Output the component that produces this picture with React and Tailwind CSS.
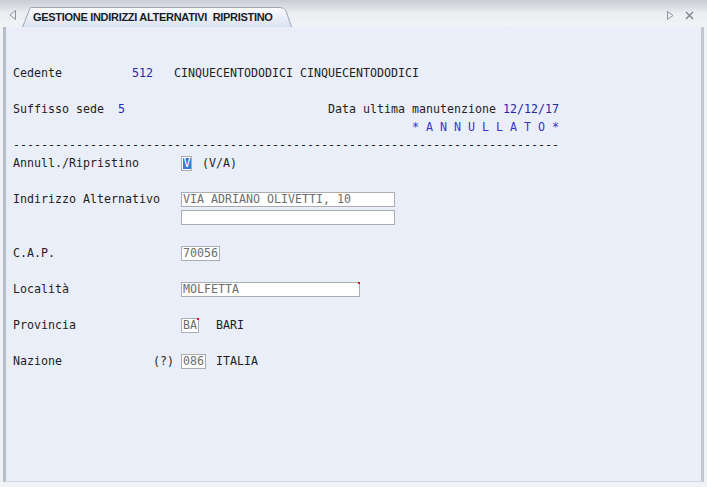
import React from 'react';

const mono = { fontFamily: '"DejaVu Sans Mono", monospace' };

// a line of the 18px terminal grid
function Line({ children }) {
  return <div className="flex h-[18px] items-center whitespace-pre leading-[18px]">{children}</div>;
}

function Box({ chars, value = '', dot = false, selected = false }) {
  return (
    <span
      className="relative inline-flex h-[15px] items-center border border-[#abadb3] bg-white pl-[1px] text-[#6d6d6d]"
      style={{ width: chars * 7 + 4 }}
    >
      {selected ? (
        <span className="inline-block h-[11px] w-[8px] bg-[#3a78d4] text-center leading-[11px] text-white">{value}</span>
      ) : (
        value
      )}
      {dot && <span className="absolute -right-[1px] -top-[1px] h-[2px] w-[2px] bg-[#e01010]" />}
    </span>
  );
}

const Blue = ({ children }) => <span className="text-[#2727a8]">{children}</span>;

function Label({ text }) {
  return <span className="w-[168px] shrink-0">{text}</span>;
}

export default function App() {
  return (
    <div className="flex h-[487px] w-[707px] flex-col bg-[#f1f2f5]">
      {/* tab strip */}
      <div className="relative flex h-[27px] shrink-0 items-end bg-gradient-to-b from-[#c9cdd4] via-[#eceef2] to-[#f2f3f6]">
        <svg width="8" height="10" viewBox="0 0 8 10" className="mb-[7px] ml-[9px]">
          <path d="M6.5 0.5 L1 5 L6.5 9.5 Z" fill="none" stroke="#8d929b" />
        </svg>
        <div className="relative ml-[5px] flex h-[20px] w-[270px] items-center">
          <svg width="270" height="20" viewBox="0 0 270 20" className="absolute left-0 top-0">
            <defs>
              <linearGradient id="tabg" x1="0" y1="0" x2="0" y2="1">
                <stop offset="0" stopColor="#fbfcfe" />
                <stop offset="1" stopColor="#dae3f2" />
              </linearGradient>
            </defs>
            <path
              d="M0.5 20 L8 1.5 Q8.6 0.5 10 0.5 L258 0.5 Q262 0.5 264 4 L269.5 20"
              fill="url(#tabg)"
              stroke="#9ea6b4"
            />
          </svg>
          <span
            className="relative ml-[11px] text-[11px] font-bold tracking-[-0.3px] text-[#1b1d28]"
            style={{ fontFamily: '"Liberation Sans", Arial, sans-serif' }}
          >
            GESTIONE INDIRIZZI ALTERNATIVI&nbsp;&nbsp;RIPRISTINO
          </span>
        </div>
        <div className="ml-auto mb-[7px] mr-[13px] flex items-center gap-[11px]">
          <svg width="7" height="9" viewBox="0 0 7 9">
            <path d="M0.5 0.5 L6 4.5 L0.5 8.5 Z" fill="none" stroke="#8d929b" />
          </svg>
          <svg width="9" height="9" viewBox="0 0 9 9">
            <path d="M1 1 L8 8 M8 1 L1 8" stroke="#7d828b" strokeWidth="1.4" />
          </svg>
        </div>
      </div>

      {/* form area */}
      <div className="mx-[3px] mb-[5px] flex-1 border-l-[3px] border-r-[3px] border-b border-l-[#b5bdc9] border-r-[#c3c8d0] border-b-[#d4d8de] bg-[#eaeef8] pl-[7px] pt-[37px] text-[11.63px] text-[#1e1e1e]" style={mono}>
        <Line>
          <Label text="Cedente" />
          <span className="-ml-[49px]">
            <Blue>512</Blue>   CINQUECENTODODICI CINQUECENTODODICI
          </span>
        </Line>
        <Line />
        <Line>
          <span>
            {'Suffisso sede  '}
            <Blue>5</Blue>
            {' '.repeat(29) + 'Data ultima manutenzione '}
            <Blue>12/12/17</Blue>
          </span>
        </Line>
        <Line>
          <span>
            {' '.repeat(57)}
            <span className="text-[#3535cf]">* A N N U L L A T O *</span>
          </span>
        </Line>
        <Line>{'-'.repeat(78)}</Line>
        <Line>
          <Label text="Annull./Ripristino" />
          <Box chars={1} value="V" selected />
          <span className="ml-[10px]">(V/A)</span>
        </Line>
        <Line />
        <Line>
          <Label text="Indirizzo Alternativo" />
          <Box chars={30} value="VIA ADRIANO OLIVETTI, 10" />
        </Line>
        <Line>
          <span className="w-[168px] shrink-0" />
          <Box chars={30} />
        </Line>
        <Line />
        <Line>
          <Label text="C.A.P." />
          <Box chars={5} value="70056" />
        </Line>
        <Line />
        <Line>
          <Label text="Località" />
          <Box chars={25} value="MOLFETTA" dot />
        </Line>
        <Line />
        <Line>
          <Label text="Provincia" />
          <Box chars={2} value="BA" dot />
          <span className="ml-[17px]">BARI</span>
        </Line>
        <Line />
        <Line>
          <span className="w-[140px] shrink-0">Nazione</span>
          <span className="w-[28px] shrink-0">(?)</span>
          <Box chars={3} value="086" />
          <span className="ml-[10px]">ITALIA</span>
        </Line>
      </div>
    </div>
  );
}
